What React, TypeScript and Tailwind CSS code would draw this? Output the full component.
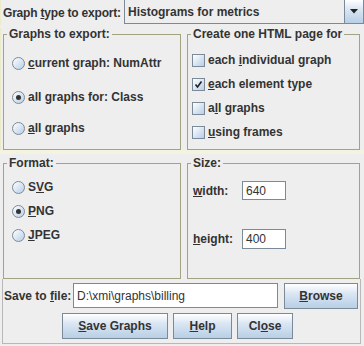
import React from 'react';

const btn =
  'flex items-center justify-center border border-[#7a8a99] bg-[linear-gradient(to_bottom,#ffffff,#dae6f3_40%,#b8cfe5)] text-[#333333] font-bold';

const Radio = ({ checked }: { checked?: boolean }) => (
  <span className="relative inline-flex w-[13px] h-[13px] shrink-0 rounded-full border border-[#7a8a99] bg-[linear-gradient(135deg,#ffffff,#dae6f3_50%,#b8cfe5)] items-center justify-center">
    {checked && <span className="w-[5px] h-[5px] rounded-full bg-[#333333]" />}
  </span>
);

const Check = ({ checked }: { checked?: boolean }) => (
  <span className="inline-flex w-[13px] h-[13px] shrink-0 border border-[#7a8a99] bg-[linear-gradient(135deg,#ffffff,#dae6f3_50%,#b8cfe5)] items-center justify-center">
    {checked && (
      <svg width="9" height="9" viewBox="0 0 9 9">
        <path d="M1.5 4.5 L3.5 7 L7.5 1.5" fill="none" stroke="#222" strokeWidth="1.6" />
      </svg>
    )}
  </span>
);

const M = ({ children }: { children: React.ReactNode }) => (
  <span className="underline underline-offset-1">{children}</span>
);

const Row = ({ children }: { children: React.ReactNode }) => (
  <div className="h-[20px] flex items-center gap-[3px] whitespace-nowrap">{children}</div>
);

const Panel = ({
  title,
  className,
  children,
}: {
  title: string;
  className: string;
  children: React.ReactNode;
}) => (
  <fieldset className={'border border-[#a3a383] ' + className}>
    <legend className="ml-[3px] px-[2px] leading-[12px] h-[12px] whitespace-nowrap">{title}</legend>
    {children}
  </fieldset>
);

export default function App() {
  return (
    <div
      className="w-[364px] h-[346px] bg-[#eeeeee] text-[#333333] font-bold text-[12px] overflow-hidden flex flex-col whitespace-nowrap"
      style={{ fontFamily: '"Liberation Sans", Arial, sans-serif' }}
    >
      {/* graph type */}
      <div className="h-[25px] flex items-start border-l border-[#ecebc9]">
        <div className="w-[123px] shrink-0 pl-[2px] h-[25px] flex items-center">
          <span className="whitespace-nowrap tracking-[-0.2px]">
            Graph <M>t</M>ype to export:
          </span>
        </div>
        <div className="flex-1 h-[25px] -mt-[1px] flex border border-[#7a8a99] bg-[#eeeeee]">
          <div className="flex-1 flex items-center pl-[3px]">Histograms for metrics</div>
          <div className="w-[19px] border-l border-[#7a8a99] bg-[linear-gradient(to_bottom,#ffffff,#dae6f3_40%,#b8cfe5)] flex items-center justify-center">
            <svg width="8" height="5" viewBox="0 0 8 5">
              <path d="M0 0 H8 L4 4.5 Z" fill="#222" />
            </svg>
          </div>
        </div>
      </div>

      {/* top panels */}
      <div className="flex mt-[3px] h-[122px] border-l border-[#ecebc9]">
        <Panel title="Graphs to export:" className="ml-[2px] w-[178px] h-[122px]">
          <div className="flex flex-col pl-[8px]">
            <div className="mt-[13px]">
              <Row>
                <Radio />
                <span>
                  <M>c</M>urrent graph: NumAttr
                </span>
              </Row>
            </div>
            <div className="mt-[14px]">
              <Row>
                <Radio checked />
                <span>
                  all <M>g</M>raphs for: Class
                </span>
              </Row>
            </div>
            <div className="mt-[11px]">
              <Row>
                <Radio />
                <span>
                  <M>a</M>ll graphs
                </span>
              </Row>
            </div>
          </div>
        </Panel>
        <Panel title="Create one HTML page for" className="ml-[6px] w-[173px] h-[122px]">
          <div className="flex flex-col gap-[4px] pt-[10px] pl-[4px]">
            <Row>
              <Check />
              <span>
                each <M>i</M>ndividual graph
              </span>
            </Row>
            <Row>
              <Check checked />
              <span>
                <M>e</M>ach element type
              </span>
            </Row>
            <Row>
              <Check />
              <span>
                a<M>l</M>l graphs
              </span>
            </Row>
            <Row>
              <Check />
              <span>
                <M>u</M>sing frames
              </span>
            </Row>
          </div>
        </Panel>
      </div>

      <div className="h-[4px] bg-[#f3f3df]" />

      {/* format / size */}
      <div className="flex mt-[3px] h-[122px]">
        <Panel title="Format:" className="ml-[3px] w-[178px] h-[122px]">
          <div className="flex flex-col gap-[4px] pt-[8px] pl-[8px]">
            <Row>
              <Radio />
              <span>
                S<M>V</M>G
              </span>
            </Row>
            <Row>
              <Radio checked />
              <span>
                <M>P</M>NG
              </span>
            </Row>
            <Row>
              <Radio />
              <span>
                <M>J</M>PEG
              </span>
            </Row>
          </div>
        </Panel>
        <Panel title="Size:" className="ml-[6px] w-[173px] h-[122px]">
          <div className="flex flex-col pl-[5px] pt-[12px]">
            <div className="flex items-center h-[19px]">
              <span className="w-[49px]">
                <M>w</M>idth:
              </span>
              <div className="w-[44px] h-[19px] border border-[#7a8a99] bg-white font-normal flex items-center pl-[3px]">
                640
              </div>
            </div>
            <div className="flex items-center h-[20px] mt-[29px]">
              <span className="w-[49px]">
                <M>h</M>eight:
              </span>
              <div className="w-[44px] h-[20px] border border-[#7a8a99] bg-white font-normal flex items-center pl-[3px]">
                400
              </div>
            </div>
          </div>
        </Panel>
      </div>

      {/* save row + buttons */}
      <div className="ml-[2px] w-[359px] h-[65px] border-x border-b border-[#b8b8b8] flex flex-col">
        <div className="flex items-center h-[27px] mt-[3px]">
          <span className="w-[70px] pl-[1px]">
            Save to <M>f</M>ile:
          </span>
          <div className="w-[205px] h-[25px] border border-[#7a8a99] bg-white font-normal flex items-center pl-[3px]">
            D:\xmi\graphs\billing
          </div>
          <div className={btn + ' ml-[6px] w-[74px] h-[26px]'}>
            <span>
              <M>B</M>rowse
            </span>
          </div>
        </div>
        <div className="flex items-center h-[26px] mt-[4px] pl-[59px] gap-[5px]">
          <div className={btn + ' w-[106px] h-[26px]'}>
            <span>
              <M>S</M>ave Graphs
            </span>
          </div>
          <div className={btn + ' w-[59px] h-[26px]'}>
            <span>
              <M>H</M>elp
            </span>
          </div>
          <div className={btn + ' w-[56px] h-[26px]'}>
            <span>
              Cl<M>o</M>se
            </span>
          </div>
        </div>
      </div>
    </div>
  );
}
